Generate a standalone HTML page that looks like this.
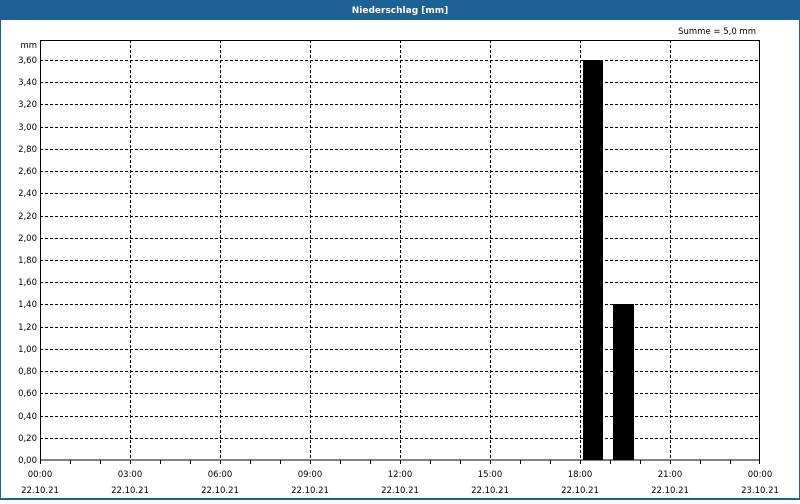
<!DOCTYPE html>
<html><head><style>
body{margin:0;width:800px;height:500px;overflow:hidden;background:#fff;font-family:"DejaVu Sans","Liberation Sans",sans-serif;}
</style></head><body>
<svg width="800" height="500" xmlns="http://www.w3.org/2000/svg" font-family="DejaVu Sans, Liberation Sans, sans-serif" font-size="8.5">
<rect x="0" y="0" width="800" height="500" fill="#1d6196"/>
<rect x="1" y="20" width="798" height="478" fill="#fff"/>
<text x="400" y="13" fill="#fff" font-weight="bold" text-anchor="middle" font-size="9">Niederschlag [mm]</text>
<text x="756" y="34" text-anchor="end">Summe = 5,0 mm</text>
<text x="37" y="48" text-anchor="end">mm</text>
<g stroke="#000" stroke-dasharray="3,2" stroke-width="1">
<line x1="40" x2="760" y1="60.5" y2="60.5"/><line x1="40" x2="760" y1="82.5" y2="82.5"/><line x1="40" x2="760" y1="104.5" y2="104.5"/><line x1="40" x2="760" y1="127.5" y2="127.5"/><line x1="40" x2="760" y1="149.5" y2="149.5"/><line x1="40" x2="760" y1="171.5" y2="171.5"/><line x1="40" x2="760" y1="193.5" y2="193.5"/><line x1="40" x2="760" y1="216.5" y2="216.5"/><line x1="40" x2="760" y1="238.5" y2="238.5"/><line x1="40" x2="760" y1="260.5" y2="260.5"/><line x1="40" x2="760" y1="282.5" y2="282.5"/><line x1="40" x2="760" y1="304.5" y2="304.5"/><line x1="40" x2="760" y1="327.5" y2="327.5"/><line x1="40" x2="760" y1="349.5" y2="349.5"/><line x1="40" x2="760" y1="371.5" y2="371.5"/><line x1="40" x2="760" y1="393.5" y2="393.5"/><line x1="40" x2="760" y1="416.5" y2="416.5"/><line x1="40" x2="760" y1="438.5" y2="438.5"/>
<line y1="40" y2="460" x1="130.5" x2="130.5"/><line y1="40" y2="460" x1="220.5" x2="220.5"/><line y1="40" y2="460" x1="310.5" x2="310.5"/><line y1="40" y2="460" x1="400.5" x2="400.5"/><line y1="40" y2="460" x1="490.5" x2="490.5"/><line y1="40" y2="460" x1="580.5" x2="580.5"/><line y1="40" y2="460" x1="670.5" x2="670.5"/>
</g>
<rect x="583" y="60" width="20" height="400" fill="#000"/>
<rect x="613" y="304" width="21" height="156" fill="#000"/>
<rect x="40.5" y="40.5" width="719" height="419.5" fill="none" stroke="#000"/>
<g stroke="#000">
<path d="M40.5 460v4M70.5 460v4M100.5 460v4M130.5 460v4M160.5 460v4M190.5 460v4M220.5 460v4M250.5 460v4M280.5 460v4M310.5 460v4M340.5 460v4M370.5 460v4M400.5 460v4M430.5 460v4M460.5 460v4M490.5 460v4M520.5 460v4M550.5 460v4M580.5 460v4M610.5 460v4M640.5 460v4M670.5 460v4M700.5 460v4M730.5 460v4M759.5 460v4"/>
</g>
<g text-anchor="end">
<text x="37" y="63">3,60</text><text x="37" y="85">3,40</text><text x="37" y="107">3,20</text><text x="37" y="130">3,00</text><text x="37" y="152">2,80</text><text x="37" y="174">2,60</text><text x="37" y="196">2,40</text><text x="37" y="219">2,20</text><text x="37" y="241">2,00</text><text x="37" y="263">1,80</text><text x="37" y="285">1,60</text><text x="37" y="307">1,40</text><text x="37" y="330">1,20</text><text x="37" y="352">1,00</text><text x="37" y="374">0,80</text><text x="37" y="396">0,60</text><text x="37" y="419">0,40</text><text x="37" y="441">0,20</text><text x="37" y="463">0,00</text>
</g>
<g text-anchor="middle">
<text x="40" y="477">00:00</text><text x="130" y="477">03:00</text><text x="220" y="477">06:00</text><text x="310" y="477">09:00</text><text x="400" y="477">12:00</text><text x="490" y="477">15:00</text><text x="580" y="477">18:00</text><text x="670" y="477">21:00</text><text x="760" y="477">00:00</text>
<text x="40" y="493">22.10.21</text><text x="130" y="493">22.10.21</text><text x="220" y="493">22.10.21</text><text x="310" y="493">22.10.21</text><text x="400" y="493">22.10.21</text><text x="490" y="493">22.10.21</text><text x="580" y="493">22.10.21</text><text x="670" y="493">22.10.21</text><text x="760" y="493">23.10.21</text>
</g>
</svg>
</body></html>
